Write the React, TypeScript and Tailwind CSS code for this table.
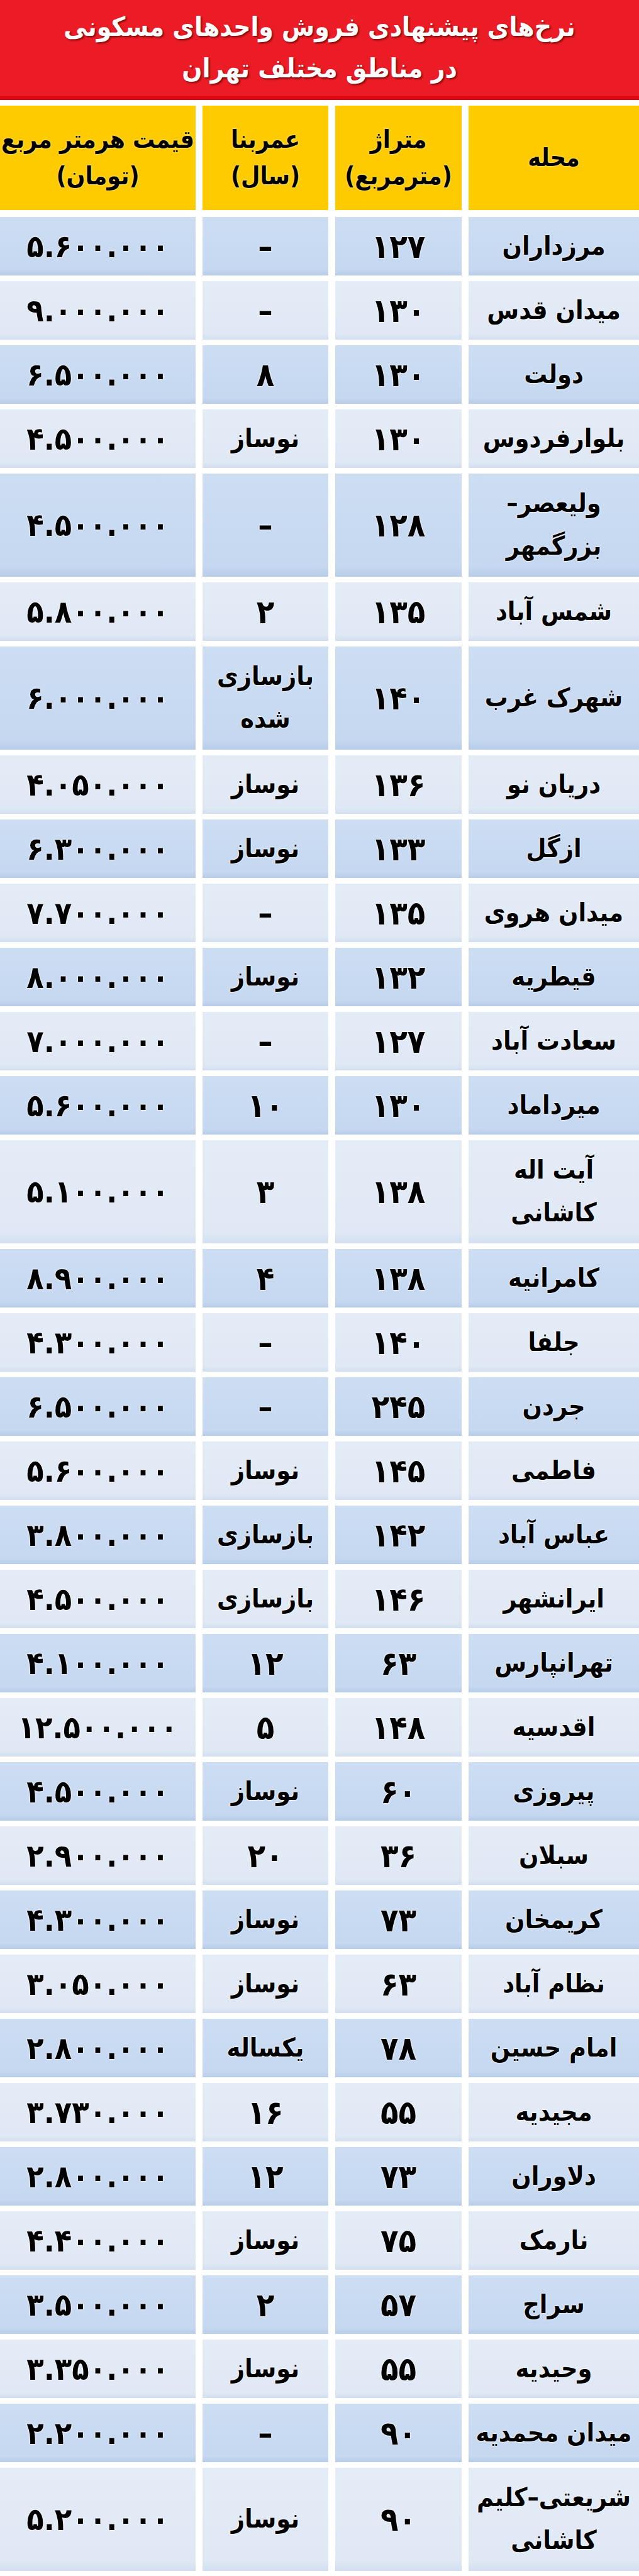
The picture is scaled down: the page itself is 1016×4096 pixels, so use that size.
import React from "react";

type Row = {
  name: string;
  area: string;
  age: string;
  price: string;
};

const rows: Row[] = [
  { name: "مرزداران", area: "127", age: "–", price: "5.600.000" },
  { name: "میدان قدس", area: "130", age: "–", price: "9.000.000" },
  { name: "دولت", area: "130", age: "8", price: "6.500.000" },
  { name: "بلوارفردوس", area: "130", age: "نوساز", price: "4.500.000" },
  { name: "ولیعصر–\nبزرگمهر", area: "128", age: "–", price: "4.500.000" },
  { name: "شمس آباد", area: "135", age: "2", price: "5.800.000" },
  { name: "شهرک غرب", area: "140", age: "بازسازی\nشده", price: "6.000.000" },
  { name: "دریان نو", area: "136", age: "نوساز", price: "4.050.000" },
  { name: "ازگل", area: "133", age: "نوساز", price: "6.300.000" },
  { name: "میدان هروی", area: "135", age: "–", price: "7.700.000" },
  { name: "قیطریه", area: "132", age: "نوساز", price: "8.000.000" },
  { name: "سعادت آباد", area: "127", age: "–", price: "7.000.000" },
  { name: "میرداماد", area: "130", age: "10", price: "5.600.000" },
  { name: "آیت اله\nکاشانی", area: "138", age: "3", price: "5.100.000" },
  { name: "کامرانیه", area: "138", age: "4", price: "8.900.000" },
  { name: "جلفا", area: "140", age: "–", price: "4.300.000" },
  { name: "جردن", area: "245", age: "–", price: "6.500.000" },
  { name: "فاطمی", area: "145", age: "نوساز", price: "5.600.000" },
  { name: "عباس آباد", area: "142", age: "بازسازی", price: "3.800.000" },
  { name: "ایرانشهر", area: "146", age: "بازسازی", price: "4.500.000" },
  { name: "تهرانپارس", area: "63", age: "12", price: "4.100.000" },
  { name: "اقدسیه", area: "148", age: "5", price: "12.500.000" },
  { name: "پیروزی", area: "60", age: "نوساز", price: "4.500.000" },
  { name: "سبلان", area: "36", age: "20", price: "2.900.000" },
  { name: "کریمخان", area: "73", age: "نوساز", price: "4.300.000" },
  { name: "نظام آباد", area: "63", age: "نوساز", price: "3.050.000" },
  { name: "امام حسین", area: "78", age: "یکساله", price: "2.800.000" },
  { name: "مجیدیه", area: "55", age: "16", price: "3.730.000" },
  { name: "دلاوران", area: "73", age: "12", price: "2.800.000" },
  { name: "نارمک", area: "75", age: "نوساز", price: "4.400.000" },
  { name: "سراج", area: "57", age: "2", price: "3.500.000" },
  { name: "وحیدیه", area: "55", age: "نوساز", price: "3.350.000" },
  { name: "میدان محمدیه", area: "90", age: "–", price: "2.200.000" },
  { name: "شریعتی–کلیم\nکاشانی", area: "90", age: "نوساز", price: "5.200.000" },
];

const faDigits = "۰۱۲۳۴۵۶۷۸۹";
const toFa = (s: string) => s.replace(/[0-9]/g, (d) => faDigits[Number(d)]);

function Lines({ text }: { text: string }) {
  const parts = text.split("\n");
  return (
    <>
      {parts.map((p, i) => (
        <span key={i} className="block whitespace-nowrap">
          {p}
        </span>
      ))}
    </>
  );
}

function Cell({ children, dark }: { children: React.ReactNode; dark: boolean }) {
  return (
    <div
      className={`flex flex-col items-center justify-center text-center overflow-hidden ${
        dark
          ? "bg-linear-to-b from-[#cddef3] via-[#c5d8f0] via-90% to-[#b7cce8]"
          : "bg-linear-to-b from-[#e4ecf7] via-[#dfe8f4] via-90% to-[#d2dff0]"
      }`}
    >
      {children}
    </div>
  );
}

export default function App() {
  return (
    <div
      dir="rtl"
      className="w-[1016px] bg-white text-black font-bold"
      style={{ fontFamily: '"DejaVu Sans Condensed", "DejaVu Sans", sans-serif' }}
    >
      {/* title */}
      <div className="h-[159px] bg-[#ec1c26] border-b-[6px] border-[#e20613] flex flex-col items-center justify-center pb-[2px]">
        <h1 className="text-white text-[42px] leading-[66px] text-center [text-shadow:2px_2px_3px_#7d0a0a]">
          نرخ‌های پیشنهادی فروش واحدهای مسکونی
          <br />
          در مناطق مختلف تهران
        </h1>
      </div>

      {/* column headers */}
      <div className="mt-[9px] grid grid-cols-[271px_201px_200px_311px] gap-x-[11px] h-[166px] text-[39px] leading-[1.5] [text-shadow:0_0_3px_#fff1c0]">
        <div className="bg-[#fecb00] flex items-center justify-center text-center">محله</div>
        <div className="bg-[#fecb00] flex flex-col items-center justify-center text-center">
          <span>متراژ</span>
          <span>(مترمربع)</span>
        </div>
        <div className="bg-[#fecb00] flex flex-col items-center justify-center text-center">
          <span>عمربنا</span>
          <span>(سال)</span>
        </div>
        <div className="bg-[#fecb00] flex flex-col items-center justify-center text-center">
          <span className="whitespace-nowrap">قیمت هرمتر مربع</span>
          <span>(تومان)</span>
        </div>
      </div>

      {/* data rows */}
      <div className="mt-[11px] flex flex-col gap-y-[9px] [text-shadow:0_0_3px_#fff,0_0_2px_#fff]">
        {rows.map((r, i) => {
          const dark = i % 2 === 0;
          const tall = r.name.includes("\n") || r.age.includes("\n");
          const ageIsNumber = /^[0-9–]+$/.test(r.age);
          return (
            <div
              key={i}
              className={`grid grid-cols-[271px_201px_200px_311px] gap-x-[11px] ${
                tall ? "h-[164px]" : "h-[93px]"
              }`}
            >
              <Cell dark={dark}>
                <div className="text-[41px] leading-[1.65]">
                  <Lines text={r.name} />
                </div>
              </Cell>
              <Cell dark={dark}>
                <span className="text-[52px] leading-none">{toFa(r.area)}</span>
              </Cell>
              <Cell dark={dark}>
                <div className={ageIsNumber ? "text-[52px] leading-none" : "text-[41px] leading-[1.65]"}>
                  <Lines text={toFa(r.age)} />
                </div>
              </Cell>
              <Cell dark={dark}>
                <span className="text-[50px] leading-none tracking-[8px] whitespace-nowrap" dir="ltr">
                  {toFa(r.price)}
                </span>
              </Cell>
            </div>
          );
        })}
      </div>
    </div>
  );
}
